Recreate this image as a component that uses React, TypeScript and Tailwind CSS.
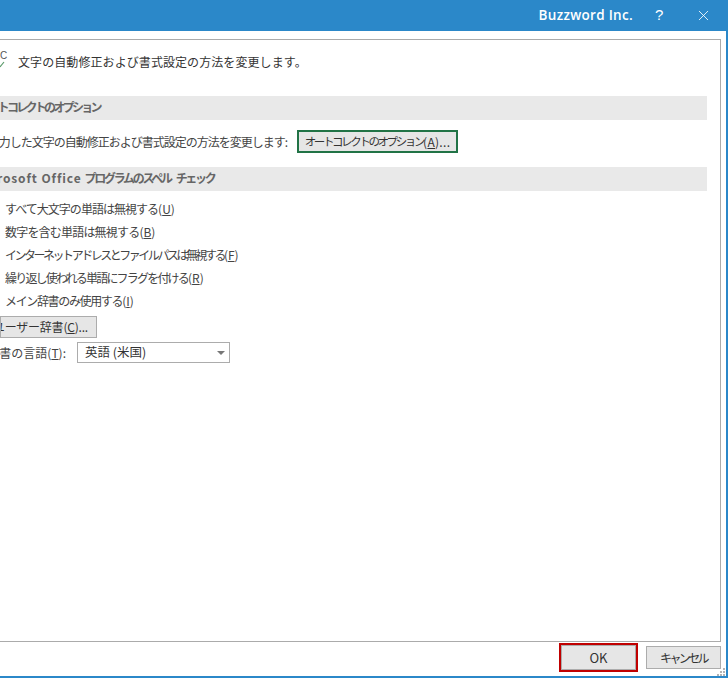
import React from 'react';
import { X } from 'lucide-react';

const font = { fontFamily: '"Noto Sans CJK JP", sans-serif' };

const spellOptions: { label: string; key: string; cls: string }[] = [
  { label: 'すべて大文字の単語は無視する', key: 'U', cls: 'tracking-[-0.97px]' },
  { label: '数字を含む単語は無視する', key: 'B', cls: 'tracking-[-0.8px]' },
  { label: 'インターネット アドレスとファイル パスは無視する', key: 'F', cls: 'tracking-[-2.5px]' },
  { label: '繰り返し使われる単語にフラグを付ける', key: 'R', cls: 'tracking-[-1.8px]' },
  { label: 'メイン辞書のみ使用する', key: 'I', cls: 'tracking-[-1.35px]' },
];

const SectionHeader = ({ children }: { children: React.ReactNode }) => (
  <div className="h-6 bg-[#e9e9e9] flex items-center pb-[2px] text-[12px] font-bold text-[#666] whitespace-nowrap overflow-hidden">
    {children}
  </div>
);

export default function App() {
  return (
    <div className="relative w-[728px] h-[678px] bg-white overflow-hidden flex flex-col border-r-2 border-b-2 border-r-[#2b88c9] border-b-[#2b88c9] text-[#444]" style={font}>
      {/* Title bar */}
      <div className="h-[31px] shrink-0 bg-[#2b88c9] flex items-center justify-end text-white">
        <span className="text-[13.5px] font-semibold tracking-[0.3px]" style={{ fontFamily: '"Open Sans", sans-serif' }}>Buzzword Inc.</span>
        <span className="ml-[22px] w-[8px] text-[15px]" style={{ fontFamily: '"Liberation Sans", sans-serif' }}>?</span>
        <X size={17} strokeWidth={1.2} className="ml-[32px] mr-[14px]" />
      </div>

      {/* Content panel */}
      <div className="mt-2 mr-[5px] h-[603px] shrink-0 border-t border-r border-b border-[#ababab] overflow-hidden">
        <div className="h-[42px] flex items-start">
          <div className="w-[18px] h-[26px] mt-[10px] relative shrink-0">
            <span className="absolute left-0 top-0 text-[10px] leading-[12px] text-[#555]" style={{ fontFamily: '"Liberation Sans", sans-serif' }}>C</span>
            <svg className="absolute left-0 top-[10px]" width="8" height="8" viewBox="0 0 8 8">
              <path d="M0 7 L4 2" stroke="#5a9a6a" strokeWidth="1.2" fill="none" />
            </svg>
          </div>
          <span className="mt-[13px] text-[12px] leading-[18px] text-[#333] whitespace-nowrap tracking-[0.08px]">文字の自動修正および書式設定の方法を変更します。</span>
        </div>

        <div className="mt-[14px] mr-[13px]">
          <SectionHeader>
            <span className="-ml-[21px] tracking-[-2.7px]">オートコレクトのオプション</span>
          </SectionHeader>

          <div className="h-[47px] flex items-center pb-[4px] whitespace-nowrap text-[12px]">
            <span className="w-[297px] shrink-0 overflow-hidden flex justify-end">
              <span className="tracking-[-1px] mr-[10px] shrink-0">入力した文字の自動修正および書式設定の方法を変更します:</span>
            </span>
            <button className="h-[23px] w-[161px] shrink-0 bg-[#e6e6e6] border-2 border-[#217346] flex items-center justify-center text-[#333]">
              <span className="text-[11.5px] tracking-[-2.4px]">オートコレクトのオプション</span>
              <span className="tracking-[0.3px]">(<span className="underline">A</span>)...</span>
            </button>
          </div>

          <SectionHeader>
            <span className="-ml-[26px] tracking-[0.9px]">Microsoft Office</span>
            <span className="ml-[3px] tracking-[-2.3px]">プログラムのスペル</span>
            <span className="ml-[5px] tracking-[-2.3px]">チェック</span>
          </SectionHeader>
        </div>

        <div className="mt-[6px] flex flex-col">
          {spellOptions.map(o => (
            <div key={o.key} className="h-[23px] pl-[5px] flex items-center text-[12px] whitespace-nowrap">
              <span className={o.cls}>{o.label}</span>
              <span>(<span className="underline">{o.key}</span>)</span>
            </div>
          ))}
        </div>

        <div className="mt-[4px] h-[22px] w-[97px] bg-[#e6e6e6] border border-[#acacac] flex items-center justify-end pr-[8px] text-[12px] text-[#333] whitespace-nowrap overflow-hidden">
          <span className="tracking-[-0.2px] shrink-0">ユーザー辞書(<span className="underline">C</span>)...</span>
        </div>

        <div className="mt-[4px] flex items-center text-[12px] whitespace-nowrap">
          <span className="w-[77px] shrink-0 overflow-hidden flex justify-end">
            <span className="mr-[11px] shrink-0">辞書の言語(<span className="underline">T</span>):</span>
          </span>
          <div className="w-[153px] h-[21px] border border-[#acacac] flex items-center justify-between pl-[7px] pr-[3px] text-[#333]">
            <span className="text-[12.5px]">英語 (米国)</span>
            <svg width="8" height="4" viewBox="0 0 8 4" className="mr-[1px]"><path d="M0 0 H8 L4 4 Z" fill="#777" /></svg>
          </div>
        </div>
      </div>

      {/* Footer */}
      <div className="flex-1 flex items-start justify-end pr-[5px] pt-[1px] gap-[8px] text-[12px] text-[#333]">
        <div className="w-[79px] h-[29px] border-2 border-[#c00000] flex">
          <button className="flex-1 bg-[#e6e6e6] border border-[#acacac] text-[13px]">OK</button>
        </div>
        <button className="mt-[3px] w-[75px] h-[23px] bg-[#e6e6e6] border border-[#acacac] tracking-[-2.6px]">キャンセル</button>
      </div>

      {/* Resize grip */}
      <svg className="absolute right-0 bottom-0" width="9" height="8" viewBox="0 0 9 8" fill="#b4b4b4">
        <rect x="6" y="0" width="2" height="2" />
        <rect x="3" y="3" width="2" height="2" />
        <rect x="6" y="3" width="2" height="2" />
        <rect x="0" y="6" width="2" height="2" />
        <rect x="3" y="6" width="2" height="2" />
        <rect x="6" y="6" width="2" height="2" />
      </svg>
    </div>
  );
}
